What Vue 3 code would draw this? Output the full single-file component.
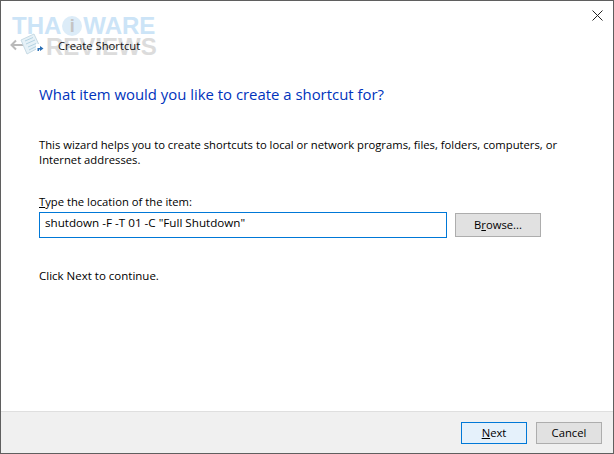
<script setup>
const intro = 'This wizard helps you to create shortcuts to local or network programs, files, folders, computers, or Internet addresses.'
const location = 'shutdown -F -T 01 -C "Full Shutdown"'
</script>

<template>
  <div class="dialog">
    <!-- title bar -->
    <div class="titlebar">
      <svg class="back" width="14" height="14" viewBox="0 0 14 14">
        <path d="M14 7H3M7 2.5L2.5 7L7 11.5" fill="none" stroke="#b9b9b9" stroke-width="2" />
      </svg>
      <svg class="shortcut-icon" width="24" height="24" viewBox="0 0 24 24">
        <path d="M1 7L14 1L20 14L7 21Z" fill="#e6f1f7" stroke="#c8dbe5" />
        <path d="M5 8L13 4.5M6 11L15 7M8 14L16 10.5M9 17L17 13" stroke="#b5d3e2" fill="none" />
        <rect x="16" y="11" width="8" height="8" fill="#fff" />
        <path d="M17.5 18V15H20V13L23.5 15.5L20 18V16.5H19V18Z" fill="#2a6fb5" />
      </svg>
      <span class="title">Create Shortcut</span>
      <svg class="close" width="11" height="11" viewBox="0 0 11 11">
        <path d="M.5 .5L10.5 10.5M10.5 .5L.5 10.5" stroke="#222" stroke-width="1" fill="none" />
      </svg>
    </div>

    <!-- watermark over the title bar -->
    <div class="watermark">
      <div class="wm-top">THA<span class="wm-i">i</span>WARE</div>
      <div class="wm-bottom">REVIEWS</div>
    </div>

    <!-- body -->
    <div class="content">
      <h1 class="heading">What item would you like to create a shortcut for?</h1>
      <p class="intro">{{ intro }}</p>
      <label class="field-label"><u>T</u>ype the location of the item:</label>
      <div class="field-row">
        <input class="location" :value="location" />
        <button class="btn browse">B<u>r</u>owse...</button>
      </div>
      <p class="hint">Click Next to continue.</p>
    </div>

    <!-- footer -->
    <div class="footer">
      <button class="btn primary"><u>N</u>ext</button>
      <button class="btn">Cancel</button>
    </div>
  </div>
</template>

<style>
html, body {
  margin: 0;
  background: #fff;
}
</style>

<style scoped>
.dialog {
  position: relative;
  box-sizing: border-box;
  width: 614px;
  height: 454px;
  display: flex;
  flex-direction: column;
  background: #fff;
  border: 1px solid #5f5f5f;
  font-family: "Open Sans", "Noto Sans", sans-serif;
  font-size: 11.25px;
  color: #000;
  overflow: hidden;
}

.titlebar {
  position: relative;
  height: 30px;
  margin-top: 29px;
  display: flex;
  align-items: center;
  padding-left: 8px;
  flex-shrink: 0;
}

.back {
  flex-shrink: 0;
}

.shortcut-icon {
  flex-shrink: 0;
  margin-left: -3px;
}

.title {
  margin-left: 14px;
  color: #111;
  position: relative;
  z-index: 2;
}

.close {
  position: absolute;
  right: 10px;
  top: -20px;
}

.watermark {
  position: absolute;
  left: 11px;
  top: 12px;
  pointer-events: none;
  font-family: "Liberation Sans", sans-serif;
  font-weight: 700;
  line-height: 1;
}

.wm-top {
  display: flex;
  align-items: center;
  height: 25px;
  font-size: 24px;
  color: #cce4f7;
}

.wm-i {
  display: block;
  width: 20px;
  height: 20px;
  margin: 0 1px;
  line-height: 20px;
  text-align: center;
  border-radius: 50%;
  background: #dcecf8;
  color: #c4c4c4;
  font-size: 18px;
}

.wm-bottom {
  margin-top: -3px;
  margin-left: 34px;
  font-size: 24px;
  color: #dcdcdc;
}

.content {
  flex: 1;
  padding: 23px 38px 0;
}

.heading {
  margin: 0;
  font-size: 14.9px;
  font-weight: 400;
  line-height: 22px;
  color: #0033bc;
}

.intro {
  margin: 32px 0 0;
  width: 530px;
  line-height: 15px;
}

.field-label {
  display: block;
  margin-top: 27px;
  line-height: 15px;
}

.field-row {
  display: flex;
  align-items: center;
  margin-top: 3px;
}

.location {
  box-sizing: border-box;
  width: 408px;
  height: 26px;
  padding: 0 5px 5px;
  border: 1px solid #0078d7;
  outline: none;
  font: inherit;
  font-size: 11.65px;
  color: #000;
}

.hint {
  margin: 30px 0 0;
  font-size: 11.5px;
  line-height: 15px;
}

.btn {
  box-sizing: border-box;
  width: 66px;
  height: 22px;
  padding: 0;
  background: #e1e1e1;
  border: 1px solid #adadad;
  font: inherit;
  color: #000;
}

.browse {
  width: 86px;
  height: 24px;
  margin-left: 8px;
  padding-bottom: 2px;
}

.footer {
  flex-shrink: 0;
  height: 42px;
  box-sizing: border-box;
  display: flex;
  justify-content: flex-end;
  align-items: center;
  gap: 9px;
  padding-right: 11px;
  background: #f0f0f0;
  border-top: 1px solid #dfdfdf;
}

.primary {
  background: #e5f1fb;
  border-color: #0078d7;
}
</style>
